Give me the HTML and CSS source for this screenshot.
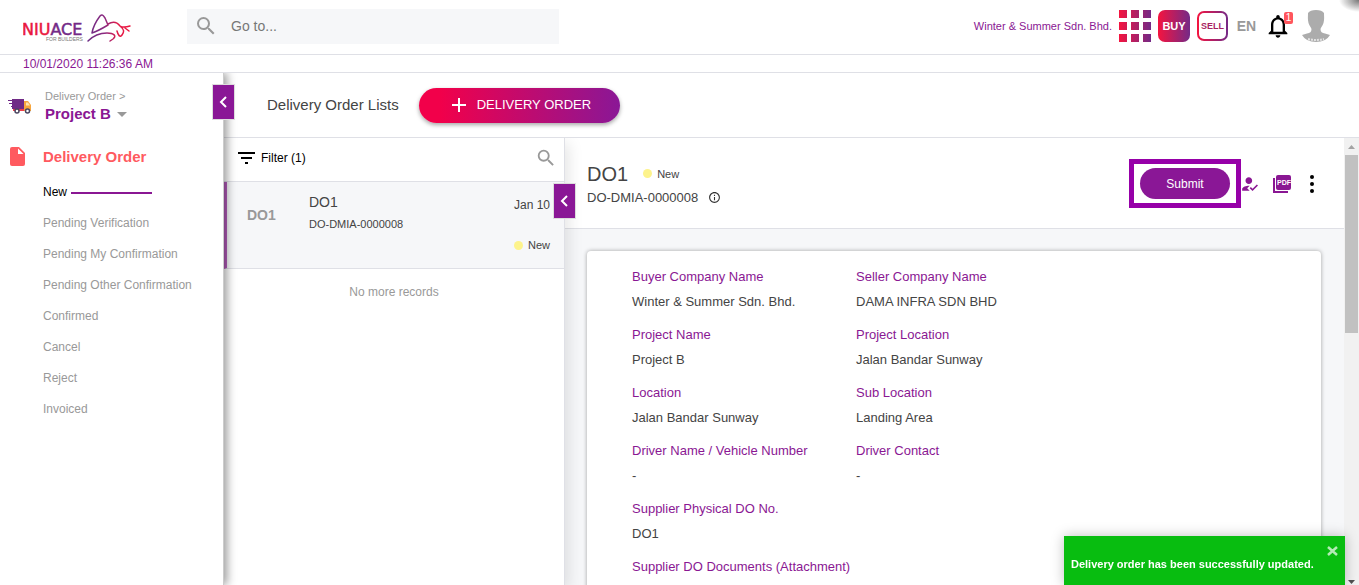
FILE: index.html
```html
<!DOCTYPE html>
<html lang="en">
<head>
<meta charset="utf-8">
<title>Delivery Order</title>
<link rel="stylesheet" href="styles.css">
</head>
<body>
<div class="app">
  <header class="topbar">
    <a class="logo" href="#" aria-label="Niuace for builders">
      <svg width="110" height="34" viewBox="0 0 110 34">
        <defs>
          <linearGradient id="bull" gradientUnits="userSpaceOnUse" x1="65" y1="0" x2="107" y2="0"><stop offset="0" stop-color="#6d2c85"/><stop offset=".4" stop-color="#8c2a80"/><stop offset=".7" stop-color="#e01a48"/><stop offset="1" stop-color="#ed1740"/></linearGradient>
        </defs>
        <text class="logo-name" x="-1" y="26"><tspan class="logo-red">NIU</tspan><tspan class="logo-purple">ACE</tspan></text>
        <text class="logo-sub" x="23" y="32">FOR BUILDERS</text>
        <g fill="none" stroke="url(#bull)" stroke-width="1.500" stroke-linecap="round" stroke-linejoin="round">
          <path d="M69 24C70 18 74 11 77 7C79 5 80 6 82 9L85 16C80 19 75 22 69 24"/>
          <path d="M85 15C90 12 94 13 97 17C100 19 104 18 107 17M97 17C102 21 101 23 99 26C97 29 95 26 94 22M102 19L106 22"/>
          <path d="M65 32C70 27 77 24 84 24C91 24 94 27 90 30L87 32"/>
        </g>
      </svg>
    </a>
    <label class="search">
      <svg class="search-icon" viewBox="0 0 24 24"><path d="M15.500 14h-.79l-.28-.27A6.470 6.470 0 0 0 16 9.500 6.500 6.500 0 1 0 9.500 16c1.610 0 3.090-.59 4.230-1.570l.27.28v.79l5 4.990L20.490 19l-4.990-5zm-6 0C7.010 14 5 11.990 5 9.500S7.010 5 9.500 5 14 7.010 14 9.500 11.990 14 9.500 14z"/></svg>
      <input type="text" placeholder="Go to..." aria-label="Go to">
    </label>
    <div class="top-actions">
      <span class="company">Winter &amp; Summer Sdn. Bhd.</span>
      <button class="plain apps" aria-label="Apps">
        <svg width="32" height="32" viewBox="0 0 32 32"><defs><linearGradient id="brand" gradientUnits="userSpaceOnUse" x1="0" y1="0" x2="32" y2="0"><stop offset="0" stop-color="#f5143f"/><stop offset="1" stop-color="#742a87"/></linearGradient></defs><path fill="url(#brand)" d="M0 0h8v8H0zM12 0h8v8h-8zM24 0h8v8h-8zM0 12h8v8H0zM12 12h8v8h-8zM24 12h8v8h-8zM0 24h8v8H0zM12 24h8v8h-8zM24 24h8v8h-8z"/></svg>
      </button>
      <button class="mode buy">BUY</button>
      <button class="mode sell">SELL</button>
      <button class="plain lang">EN</button>
      <button class="plain bell" aria-label="Notifications">
        <svg width="28" height="28" viewBox="0 0 24 24"><path d="M12 22c1.100 0 2-.9 2-2h-4c0 1.100.9 2 2 2zm6-6v-5c0-3.070-1.630-5.640-4.500-6.320V4c0-.83-.67-1.500-1.500-1.500s-1.500.67-1.500 1.500v.68C7.640 5.360 6 7.920 6 11v5l-2 2v1h16v-1l-2-2zm-2 1H8v-6c0-2.480 1.510-4.500 4-4.500s4 2.020 4 4.500v6z"/></svg>
        <span class="count">1</span>
      </button>
      <button class="plain avatar" aria-label="Account">
        <svg width="28" height="32" viewBox="0 0 28 32"><path fill="#acacac" d="M6 3Q8 0 14 0T22 3C22 7 22.500 9 21.500 13C20.500 16 19 17 18.500 19C18.500 22 20 23 23 23.500L28 25Q24 32 14 32T0 25L5 23.500C8 23 9.500 22 9.500 19C9 17 7.500 16 6.500 13C5.500 9 6 7 6 3Z"/><path fill="none" stroke="#e2e2e2" stroke-width="2" stroke-dasharray="2 1" d="M6 29Q14 31 22 29"/></svg>
      </button>
    </div>
  </header>
  <div class="clock"><time>10/01/2020 11:26:36 AM</time></div>
  <div class="body">
    <nav class="sidebar">
      <div class="module">
        <svg class="truck" width="24" height="16" viewBox="0 0 24 16">
          <path fill="#702a86" d="M4 1h12v10H4z"/><path stroke="#702a86" d="M0 2.500h5M1 5.500h4M3 8.500h2"/>
          <path fill="#ee3f4a" d="M5 11h11v2H5z"/><path fill="#f7a63e" d="M16 3h4l3 4v6h-7z"/><path fill="#fde3b2" d="M18 4.500h2l2 3h-4z"/>
          <circle cx="9" cy="13" r="2" fill="#fff" stroke="#4a4560" stroke-width="1.500"/><circle cx="19.500" cy="13" r="2" fill="#fff" stroke="#4a4560" stroke-width="1.500"/>
        </svg>
        <div>
          <a class="crumb" href="#">Delivery Order &gt;</a>
          <button class="plain project">Project B <span class="caret"></span></button>
        </div>
      </div>
      <button class="toggle side-toggle" aria-label="Collapse menu"><svg width="21" height="22" viewBox="0 0 21 22"><path d="M13 6L8 11l5 5"/></svg></button>
      <h2 class="section">
        <svg width="15" height="19" viewBox="0 0 15 19"><path fill="#ff5a5f" d="M2 0h7l6 6v11a2 2 0 0 1-2 2H2a2 2 0 0 1-2-2V2a2 2 0 0 1 2-2z"/><path fill="#fff" d="M8 1.500v5.500h5.500z"/></svg>
        Delivery Order
      </h2>
      <ul class="statuses">
        <li><a class="active" href="#">New</a></li>
        <li><a href="#">Pending Verification</a></li>
        <li><a href="#">Pending My Confirmation</a></li>
        <li><a href="#">Pending Other Confirmation</a></li>
        <li><a href="#">Confirmed</a></li>
        <li><a href="#">Cancel</a></li>
        <li><a href="#">Reject</a></li>
        <li><a href="#">Invoiced</a></li>
      </ul>
    </nav>
    <main class="main">
      <div class="toolbar">
        <h1>Delivery Order Lists</h1>
        <button class="create"><svg width="14" height="14" viewBox="0 0 14 14"><path stroke="#fff" stroke-width="2" d="M7 0v14M0 7h14"/></svg>DELIVERY ORDER</button>
      </div>
      <div class="panes">
        <section class="list">
          <div class="filter">
            <button class="plain filter-btn"><svg width="17" height="12" viewBox="0 0 17 12"><path stroke="#000" stroke-width="2" d="M0 1h17M3 6h11M7 11h3"/></svg>Filter (1)</button>
            <button class="plain" aria-label="Search list"><svg class="search-icon" viewBox="0 0 24 24"><path d="M15.500 14h-.79l-.28-.27A6.470 6.470 0 0 0 16 9.500 6.500 6.500 0 1 0 9.500 16c1.610 0 3.090-.59 4.230-1.570l.27.28v.79l5 4.990L20.490 19l-4.990-5zm-6 0C7.010 14 5 11.990 5 9.500S7.010 5 9.500 5 14 7.010 14 9.500 11.990 14 9.500 14z"/></svg></button>
          </div>
          <article class="record">
            <strong class="record-key">DO1</strong>
            <div class="record-info"><span class="record-title">DO1</span><span class="record-no">DO-DMIA-0000008</span></div>
            <div class="record-meta"><span>Jan 10</span><span class="status">New</span></div>
          </article>
          <p class="end">No more records</p>
          <button class="toggle list-toggle" aria-label="Collapse list"><svg width="21" height="22" viewBox="0 0 21 22"><path d="M13 6L8 11l5 5"/></svg></button>
        </section>
        <section class="detail">
          <div class="detail-head">
            <div>
              <div class="title-row"><h2>DO1</h2><span class="status">New</span></div>
              <div class="number-row">DO-DMIA-0000008
                <svg width="13" height="13" viewBox="0 0 24 24"><path fill="#333" d="M11 7h2v2h-2zm0 4h2v6h-2zm1-9C6.480 2 2 6.480 2 12s4.480 10 10 10 10-4.480 10-10S17.520 2 12 2zm0 18c-4.410 0-8-3.590-8-8s3.590-8 8-8 8 3.590 8 8-3.590 8-8 8z"/></svg>
              </div>
            </div>
            <div class="detail-actions">
              <div class="highlight"><button class="submit">Submit</button></div>
              <button class="plain verify" aria-label="Assign verifier"><svg width="19" height="20" viewBox="2 0 22 24"><path fill="#8a1793" d="M9 17l3-2.940c-.39-.04-.68-.06-1-.06-2.670 0-8 1.340-8 4v2h9l-3-3zm2-5c2.210 0 4-1.790 4-4s-1.790-4-4-4-4 1.790-4 4 1.790 4 4 4zM15.470 20.500L12 17l1.400-1.410 2.070 2.080 5.130-5.170 1.400 1.410z"/></svg></button>
              <button class="plain pdf" aria-label="PDF"><svg width="20" height="20" viewBox="0 0 20 20"><rect x="4" y="1" width="15" height="15" rx="2" fill="#8a1793"/><path fill="none" stroke="#8a1793" stroke-width="2" d="M2 4v14h14"/><text class="pdf-text" x="12" y="11" text-anchor="middle">PDF</text></svg></button>
              <button class="plain more" aria-label="More"><svg width="6" height="18" viewBox="0 0 6 18"><circle cx="3" cy="2" r="2"/><circle cx="3" cy="9" r="2"/><circle cx="3" cy="16" r="2"/></svg></button>
            </div>
          </div>
          <div class="detail-body">
            <dl class="card">
              <div><dt>Buyer Company Name</dt><dd>Winter &amp; Summer Sdn. Bhd.</dd></div>
              <div><dt>Seller Company Name</dt><dd>DAMA INFRA SDN BHD</dd></div>
              <div><dt>Project Name</dt><dd>Project B</dd></div>
              <div><dt>Project Location</dt><dd>Jalan Bandar Sunway</dd></div>
              <div><dt>Location</dt><dd>Jalan Bandar Sunway</dd></div>
              <div><dt>Sub Location</dt><dd>Landing Area</dd></div>
              <div><dt>Driver Name / Vehicle Number</dt><dd>-</dd></div>
              <div><dt>Driver Contact</dt><dd>-</dd></div>
              <div class="wide"><dt>Supplier Physical DO No.</dt><dd>DO1</dd></div>
              <div class="wide"><dt>Supplier DO Documents (Attachment)</dt><dd></dd></div>
            </dl>
          </div>
        </section>
        <div class="scrollbar" aria-hidden="true">
          <svg width="15" height="17" viewBox="0 0 15 17"><path fill="#a3a3a3" d="M4 11h7L7.500 7z"/></svg>
          <div class="track"><div class="thumb"></div></div>
          <svg width="15" height="7" viewBox="0 0 15 7"><path fill="#505050" d="M4 2h7L7.500 6z"/></svg>
        </div>
      </div>
    </main>
  </div>
  <div class="toast" role="status">
    <button class="plain toast-close" aria-label="Close"><svg width="11" height="10" viewBox="0 0 11 10"><path stroke="#b3ebb5" stroke-width="2.500" d="M1 1l9 8M10 1L1 9"/></svg></button>
    <p>Delivery order has been successfully updated.</p>
  </div>
</div>
</body>
</html>
```
FILE: styles.css
```css
* { box-sizing: border-box; }
body { margin: 0; font: 13px/16px "Liberation Sans", Arial, sans-serif; color: #444; background: #fff; }
h1, h2, p, ul, dl, dd { margin: 0; padding: 0; }
ul { list-style: none; }
a { color: inherit; text-decoration: none; }
button { font: inherit; color: inherit; border: 0; padding: 0; cursor: pointer; }
svg { display: block; flex: none; }
.plain { background: none; }

.app { height: 100vh; display: flex; flex-direction: column; overflow: hidden; }

.topbar { flex: none; height: 55px; padding: 0 29px 2px 23px; display: flex; align-items: center; border-bottom: 1px solid #dfe0e6; background: radial-gradient(ellipse 20px 12px at 100% 0, #777, #fff); }
.logo { width: 164px; }
.logo-name { font: 16px "DejaVu Sans", sans-serif; stroke-width: 0.5px; }
.logo-red { fill: #e9173e; stroke: #e9173e; }
.logo-purple { fill: #742a87; stroke: #742a87; }
.logo-sub { font: 5px "Liberation Sans", Arial, sans-serif; fill: #777; }
.search { width: 372px; height: 35px; padding: 0 7px; display: flex; align-items: center; gap: 13px; background: #f6f7f9; }
.search-icon { width: 22px; height: 22px; fill: #999; }
.search .search-icon { width: 24px; height: 24px; }
.search input { flex: 1; min-width: 0; border: 0; padding: 0; outline: 0; background: none; font: 14px/20px "Liberation Sans", Arial, sans-serif; color: #444; }
.search input::placeholder { color: #777; opacity: 1; }
.top-actions { margin-left: auto; display: flex; align-items: center; gap: 7px; }
.company { font-size: 11px; color: #8a1793; }
.mode { width: 32px; height: 32px; border-radius: 7px; font-size: 11px; font-weight: bold; }
.buy { color: #fff; background: linear-gradient(90deg, #f5143f, #742a87); }
.sell { width: 31px; height: 30px; border: 2px solid transparent; font-size: 9px; color: #a81f63; background: linear-gradient(#fff, #fff) padding-box, linear-gradient(90deg, #f5143f, #742a87) border-box; }
.lang { width: 21px; margin-left: 1px; font-size: 14px; font-weight: bold; color: #999; }
.bell { position: relative; }
.count { position: absolute; top: 0; right: -1px; width: 9px; height: 12px; border-radius: 2px; font-size: 10px; line-height: 12px; color: #fff; background: #ff555c; }
.avatar { margin-left: 3px; }

.clock { flex: none; height: 18px; padding-left: 23px; border-bottom: 1px solid #dfe0e6; font-size: 12px; line-height: 18px; color: #8a1793; }

.body { flex: 1; min-height: 0; display: flex; }
.sidebar { position: relative; z-index: 2; width: 224px; flex: none; border-right: 1px solid #ccc; background: #fff; box-shadow: 3px 0 9px rgba(0, 0, 0, 0.4); clip-path: inset(0 -20px 0 0); }
.module { padding: 15px 0 0 8px; display: flex; gap: 13px; }
.truck { margin-top: 10px; }
.crumb { display: block; font-size: 11px; color: #999; }
.project { display: flex; align-items: center; gap: 6px; margin-top: 2px; font-size: 15px; font-weight: bold; color: #8a1793; }
.caret { border: 5px solid transparent; border-top-color: #999; border-bottom-width: 0; }
.toggle { position: absolute; z-index: 3; width: 23px; height: 36px; border: 1px solid #ddd; background: #8a1796; }
.toggle path { fill: none; stroke: #fff; stroke-width: 2; }
.side-toggle { top: 11px; right: -12px; }
.list-toggle { top: 45px; right: -12px; }
.section { display: flex; align-items: center; gap: 18px; margin: 25px 0 0 10px; font-size: 15px; line-height: 19px; color: #ff5a5f; }
.statuses { padding: 11px 0 0 43px; font-size: 12px; line-height: 31px; color: #999; }
.statuses .active { display: flex; align-items: center; gap: 4px; color: #000; }
.active::after { content: ""; width: 81px; height: 2px; background: #8a1793; }

.main { flex: 1; min-width: 0; display: flex; flex-direction: column; }
.toolbar { flex: none; height: 65px; padding-left: 43px; display: flex; align-items: center; gap: 20px; border-bottom: 1px solid #dfe0e6; }
.toolbar h1 { font-size: 15px; font-weight: normal; }
.create { height: 35px; padding: 0 29px 0 33px; display: flex; align-items: center; gap: 11px; border-radius: 18px; font-size: 13px; color: #fff; background: linear-gradient(90deg, #f2004a 10%, #8a1796); box-shadow: 0 2px 4px rgba(0, 0, 0, 0.35); }
.panes { flex: 1; min-height: 0; display: flex; }
.list { position: relative; z-index: 1; width: 341px; flex: none; border-right: 1px solid #dfe0e6; background: #fff; box-shadow: 4px 5px 14px rgba(0, 0, 0, 0.1); clip-path: inset(0 -20px 0 0); }
.filter { height: 44px; padding: 0 7px 3px 14px; display: flex; align-items: center; justify-content: space-between; border-bottom: 1px solid #dfe0e6; }
.filter-btn { display: flex; align-items: center; gap: 6px; font-size: 12px; color: #000; }
.record { height: 87px; padding: 12px 14px 0 20px; display: flex; border-left: 3px solid #b45cba; border-bottom: 1px solid #dfe0e6; background: #f6f7f9; }
.record-key { width: 62px; padding-top: 13px; font-size: 14px; color: #999; }
.record-info { flex: 1; display: flex; flex-direction: column; gap: 6px; }
.record-info .record-title { font-size: 14px; }
.record-no { font-size: 11px; }
.record-meta { display: flex; flex-direction: column; align-items: flex-end; gap: 24px; padding-top: 3px; font-size: 12px; }
.status { display: flex; align-items: center; gap: 5px; font-size: 11px; }
.status::before { content: ""; width: 9px; height: 9px; border-radius: 50%; background: #fdf38c; }
.end { padding-top: 15px; text-align: center; font-size: 12px; color: #999; }

.detail { flex: 1; min-width: 0; display: flex; flex-direction: column; background: #f6f7f9; }
.detail-head { flex: none; height: 91px; padding: 1px 29px 0 22px; display: flex; align-items: center; justify-content: space-between; border-bottom: 1px solid #dfe0e6; background: #fff; }
.title-row { display: flex; align-items: center; gap: 15px; }
.title-row h2 { font-size: 20px; line-height: 28px; font-weight: normal; }
.number-row { display: flex; align-items: center; gap: 10px; line-height: 20px; }
.detail-actions { display: flex; align-items: center; }
.highlight { padding: 4px 6px; border: 5px solid #9600a8; }
.submit { display: block; width: 90px; height: 31px; border-radius: 16px; font-size: 12px; color: #fff; background: #8a1796; }
.pdf { margin-left: 12px; }
.pdf-text { font: bold 7px "Liberation Sans", Arial, sans-serif; fill: #fff; }
.more { margin-left: 17px; }
.detail-body { flex: 1; min-height: 0; padding: 22px 23px 0 22px; overflow: hidden; }
.card { padding: 13px 45px 20px; display: grid; grid-template-columns: 224px 1fr; row-gap: 8px; border-radius: 4px; background: #fff; box-shadow: 0 0 4px rgba(0, 0, 0, 0.35); line-height: 25px; }
.card dt { color: #8a1793; }
.wide { grid-column: 1 / -1; }

.scrollbar { width: 15px; flex: none; display: flex; flex-direction: column; background: #f1f1f1; }
.track { flex: 1; padding: 0 1px; }
.thumb { height: 42%; background: #c1c1c1; }

.toast { position: fixed; z-index: 10; right: 14px; bottom: 0; width: 281px; padding: 10px 7px 13px; color: #fff; background: #08bd10; box-shadow: 0 0 12px rgba(0, 0, 0, 0.25); font-size: 11px; font-weight: bold; line-height: 16px; }
.toast-close { display: block; margin-left: auto; }
.toast p { white-space: nowrap; }
```
